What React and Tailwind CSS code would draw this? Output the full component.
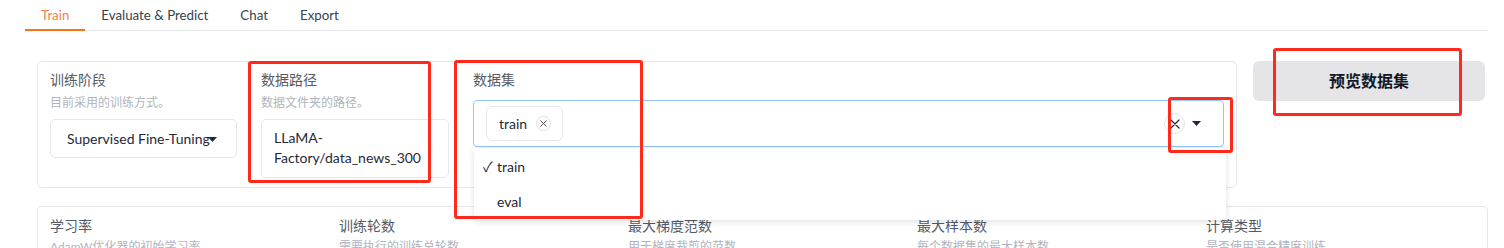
import React from "react";

const Caret = ({ className = "" }) => (
  <svg width="9" height="5" viewBox="0 0 9 5" className={className}>
    <path d="M0 0 L9 0 L4.5 5 Z" fill="#1f2937" />
  </svg>
);

const XIcon = ({ size = 8, stroke = "#374151", sw = 1.2 }) => (
  <svg width={size} height={size} viewBox="0 0 10 10">
    <path d="M1 1 L9 9 M9 1 L1 9" stroke={stroke} strokeWidth={sw} strokeLinecap="round" />
  </svg>
);

const Label = ({ children }) => (
  <div className="text-[14px] leading-[20px] text-[#555b66]">{children}</div>
);
const Desc = ({ children }) => (
  <div className="text-[12px] leading-[16px] text-[#b0b4bb] mt-[5px]">{children}</div>
);

export default function App() {
  const tabs = ["Train", "Evaluate & Predict", "Chat", "Export"];
  const bottom = [
    ["学习率", "AdamW优化器的初始学习率。"],
    ["训练轮数", "需要执行的训练总轮数。"],
    ["最大梯度范数", "用于梯度裁剪的范数。"],
    ["最大样本数", "每个数据集的最大样本数。"],
    ["计算类型", "是否使用混合精度训练。"],
  ];
  return (
    <div
      className="relative w-[1504px] h-[248px] overflow-hidden bg-white text-[#1f2937]"
      style={{ fontFamily: 'Lato, "Noto Sans CJK SC", sans-serif' }}
    >
      {/* tabs */}
      <div className="ml-[25px] mr-[16px] flex h-[31px] border-b border-[#e5e7eb]">
        {tabs.map((t, i) => (
          <div
            key={t}
            className={
              "relative flex items-center pt-[2px] text-[13.3px] " +
              (i === 0 ? "pl-4 pr-[16px] text-[#f5824a]" : "px-4 text-[#374151]")
            }
          >
            {t}
            {i === 0 && (
              <div className="absolute left-0 right-0 bottom-[-1px] h-[2px] bg-[#f97316]" />
            )}
          </div>
        ))}
      </div>

      <div className="pl-[37px] pr-[16px]">
        {/* top row */}
        <div className="mt-[30px] flex items-start gap-4">
          <div className="w-[1200px] h-[127px] border border-[#e5e7eb] rounded-[5px] px-3 pt-2 flex gap-6">
            {/* col 1 */}
            <div className="w-[187px] shrink-0">
              <Label>训练阶段</Label>
              <Desc>目前采用的训练方式。</Desc>
              <div className="mt-2 h-[39px] border border-[#e5e7eb] rounded-[5px] flex items-center pl-4 text-[14px] text-[#1f2937]">
                <span className="whitespace-nowrap">Supervised Fine-Tuning</span>
                <Caret className="-ml-[2px] mt-[1px]" />
              </div>
            </div>
            {/* col 2 */}
            <div className="w-[188px] shrink-0">
              <Label>数据路径</Label>
              <Desc>数据文件夹的路径。</Desc>
              <div className="mt-2 h-[59px] border border-[#e5e7eb] rounded-[5px] pl-3 pt-[8px] text-[14px] leading-[20px] text-[#1f2937]">
                <div>LLaMA-</div>
                <div>Factory/data_news_300</div>
              </div>
            </div>
            {/* col 3 */}
            <div className="w-[751px] shrink-0 relative">
              <Label>数据集</Label>
              <div className="mt-[10px] h-[47px] border border-[#93c5fd] rounded-[4px] flex items-center pl-3 pr-[22px]">
                <div className="h-[35px] w-[77px] border border-[#e5e7eb] rounded-[6px] flex items-center pl-3 gap-[9px] text-[14px] text-[#1f2937]">
                  <span>train</span>
                  <span className="w-[15px] h-[15px] rounded-full border border-[#dcdfe4] flex items-center justify-center">
                    <XIcon size={7} sw={1.3} />
                  </span>
                </div>
                <div className="flex-1" />
                <span className="w-[21px] h-[21px] rounded-full border border-[#e2e4e8] flex items-center justify-center">
                  <XIcon size={10} sw={1.2} stroke="#1f2937" />
                </span>
                <Caret className="ml-[7px]" />
              </div>
              {/* dropdown */}
              <div className="absolute left-[1px] top-[77px] w-[752px] h-[73px] bg-white rounded-b-[4px] shadow-[0_2px_6px_rgba(0,0,0,0.12)] border-t border-[#eeeeee] z-10 text-[14px] text-[#1f2937]">
                <div className="h-[36px] flex items-center pl-[9px]">
                  <span className="w-[14px]">✓</span>
                  <span>train</span>
                </div>
                <div className="h-[35px] flex items-center pl-[23px]">eval</div>
              </div>
            </div>
          </div>
          <button className="w-[232px] h-[40px] rounded-[6px] bg-[#e5e5e8] text-[16px] font-bold text-[#111827]">
            预览数据集
          </button>
        </div>

        {/* bottom box */}
        <div className="mt-[18px] w-[1451px] h-[80px] border border-[#e5e7eb] rounded-[5px] px-3 pt-[9px] grid grid-cols-[repeat(5,265px)] gap-6">
          {bottom.map(([l, d]) => (
            <div key={l}>
              <Label>{l}</Label>
              <div className="text-[12px] leading-[16px] text-[#b0b4bb] mt-[3px]">{d}</div>
            </div>
          ))}
        </div>
      </div>

      {/* annotation rectangles */}
      <div className="absolute left-[248px] top-[61px] w-[183px] h-[122px] border-[3px] border-[#ff2a1a] rounded-[3px] z-20" />
      <div className="absolute left-[454px] top-[60px] w-[189px] h-[159px] border-[3px] border-[#ff2a1a] rounded-[3px] z-20" />
      <div className="absolute left-[1168px] top-[97px] w-[65px] h-[56px] border-[3px] border-[#ff2a1a] rounded-[3px] z-20" />
      <div className="absolute left-[1273px] top-[48px] w-[189px] h-[68px] border-[3px] border-[#ff2a1a] rounded-[3px] z-20" />
    </div>
  );
}
